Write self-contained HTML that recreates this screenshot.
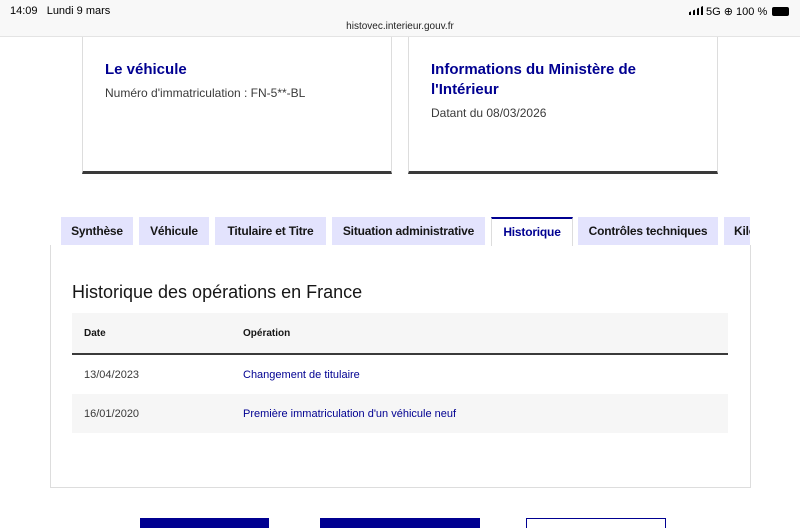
<!DOCTYPE html>
<html><head><meta charset="utf-8"><style>
*{box-sizing:border-box;margin:0;padding:0}
body{width:800px;height:525px;overflow:hidden;background:#fff;font-family:"Liberation Sans",sans-serif;position:relative;color:#3a3a3a}
.sb{position:absolute;left:0;top:0;width:800px;height:37px;background:#f8f8f8;border-bottom:1px solid #e4e4e4}
.abs{position:absolute}
.card{position:absolute;top:37px;height:137px;border:1px solid #ddd;border-top:none;border-bottom:3px solid #3a3a3a;background:#fff}
.card h3{position:absolute;left:22px;font-size:15px;color:#000091;font-weight:bold;line-height:20px}
.card p{position:absolute;left:22px;font-size:12px;color:#3a3a3a}
.tab{position:absolute;top:217px;height:28px;background:#e3e3fd;font-size:12px;font-weight:bold;color:#161616;text-align:center;line-height:28px;white-space:nowrap;overflow:hidden;letter-spacing:-0.2px}
.panel{position:absolute;left:50px;top:245px;width:701px;height:243px;border:1px solid #ddd;border-top:none}
</style></head><body>
<div class="sb">
<div class="abs" style="left:10px;top:5px;font-size:11px;color:#000">14:09&nbsp;&nbsp;&nbsp;Lundi 9 mars</div>
<div class="abs" style="left:0;width:800px;top:21px;text-align:center;font-size:10px;color:#222">histovec.interieur.gouv.fr</div>
<div class="abs" style="left:689px;top:5px;font-size:11px;color:#000">
<span style="display:inline-block;width:14px;height:9px;background:linear-gradient(90deg,#000 2px,transparent 2px 4px,#000 4px 6px,transparent 6px 8px,#000 8px 10px,transparent 10px 12px,#000 12px);clip-path:polygon(0 70%,100% 0,100% 100%,0 100%)"></span> 5G ⊕ 100 %</div>
<div class="abs" style="left:772px;top:7px;width:17px;height:9px;background:#000;border-radius:2px"></div>
</div>
<div class="card" style="left:82px;width:310px"><h3 style="top:23px">Le véhicule</h3><p style="top:49px">Numéro d'immatriculation : FN-5**-BL</p></div>
<div class="card" style="left:408px;width:310px"><h3 style="top:23px">Informations du Ministère de<br>l'Intérieur</h3><p style="top:69px">Datant du 08/03/2026</p></div>
<div class="panel"></div>
<div class="tab" style="left:61px;width:72px">Synthèse</div>
<div class="tab" style="left:139px;width:70px">Véhicule</div>
<div class="tab" style="left:215px;width:111px">Titulaire et Titre</div>
<div class="tab" style="left:332px;width:153px">Situation administrative</div>
<div class="tab" style="left:491px;width:82px;background:#fff;border:1px solid #ddd;border-bottom:none;border-top:2px solid #000091;color:#000091;height:29px;line-height:26px">Historique</div>
<div class="tab" style="left:578px;width:140px">Contrôles techniques</div>
<div class="tab" style="left:724px;width:26px;text-align:left;padding-left:10px">Kilométrage</div>
<div class="abs" style="left:72px;top:282px;font-size:18px;color:#161616">Historique des opérations en France</div>
<div class="abs" style="left:72px;top:313px;width:656px;height:42px;background:#f6f6f6;border-bottom:2px solid #3a3a3a"></div>
<div class="abs" style="left:84px;top:328px;font-size:10px;font-weight:bold;color:#161616">Date</div>
<div class="abs" style="left:243px;top:328px;font-size:10px;font-weight:bold;color:#161616">Opération</div>
<div class="abs" style="left:84px;top:369px;font-size:11px">13/04/2023</div>
<div class="abs" style="left:243px;top:369px;font-size:11px;color:#000091">Changement de titulaire</div>
<div class="abs" style="left:72px;top:394px;width:656px;height:39px;background:#f6f6f6"></div>
<div class="abs" style="left:84px;top:408px;font-size:11px">16/01/2020</div>
<div class="abs" style="left:243px;top:408px;font-size:11px;color:#000091">Première immatriculation d'un véhicule neuf</div>
<div class="abs" style="left:140px;top:518px;width:129px;height:10px;background:#000091"></div>
<div class="abs" style="left:320px;top:518px;width:160px;height:10px;background:#000091"></div>
<div class="abs" style="left:526px;top:518px;width:140px;height:10px;border:1px solid #000091;border-bottom:none"></div>
</body></html>
